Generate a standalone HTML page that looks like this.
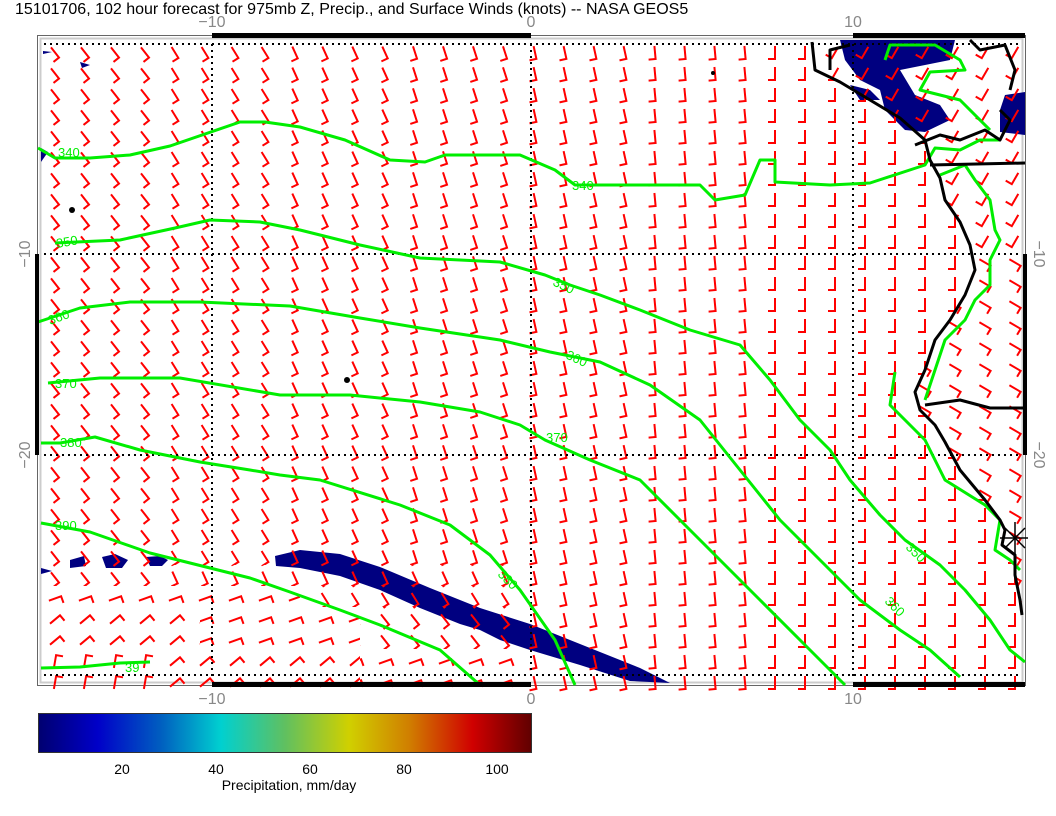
<!DOCTYPE html>
<html><head><meta charset="utf-8"><style>
html,body{margin:0;padding:0;background:#fff;width:1056px;height:816px;overflow:hidden}
svg{display:block}
text{font-family:"Liberation Sans",sans-serif}
</style></head><body>
<svg width="1056" height="816" xmlns="http://www.w3.org/2000/svg">
<defs>
<linearGradient id="cb" x1="0" x2="1" y1="0" y2="0">
<stop offset="0" stop-color="#000070"/>
<stop offset="0.12" stop-color="#0000c8"/>
<stop offset="0.25" stop-color="#0060c0"/>
<stop offset="0.37" stop-color="#00d0d0"/>
<stop offset="0.5" stop-color="#60c060"/>
<stop offset="0.63" stop-color="#d0d000"/>
<stop offset="0.75" stop-color="#d08000"/>
<stop offset="0.88" stop-color="#d00000"/>
<stop offset="1" stop-color="#600000"/>
</linearGradient>
<g id="dummy"></g>
<pattern id="p38" patternUnits="userSpaceOnUse" x="40" y="42" width="30" height="21"><path d="M11,5.4L19,15.6L13.5,19.9" stroke="#f00" stroke-width="2" fill="none"/></pattern>
<pattern id="p32" patternUnits="userSpaceOnUse" x="40" y="42" width="30" height="21"><path d="M11.6,5L18.4,16L12.5,19.7" stroke="#f00" stroke-width="2" fill="none"/></pattern>
<pattern id="p25" patternUnits="userSpaceOnUse" x="40" y="42" width="30" height="21"><path d="M12.3,4.6L17.7,16.4L11.4,19.4" stroke="#f00" stroke-width="2" fill="none"/></pattern>
<pattern id="p18" patternUnits="userSpaceOnUse" x="40" y="42" width="30" height="21"><path d="M13,4.3L17,16.7L10.3,18.9" stroke="#f00" stroke-width="2" fill="none"/></pattern>
<pattern id="p12" patternUnits="userSpaceOnUse" x="40" y="42" width="30" height="21"><path d="M13.6,4.1L16.4,16.9L9.5,18.4" stroke="#f00" stroke-width="2" fill="none"/></pattern>
<pattern id="p5" patternUnits="userSpaceOnUse" x="40" y="42" width="30" height="21"><path d="M14.4,4L15.6,17L8.6,17.6" stroke="#f00" stroke-width="2" fill="none"/></pattern>
<pattern id="p0" patternUnits="userSpaceOnUse" x="40" y="42" width="30" height="21"><path d="M15,4L15,17L8,17" stroke="#f00" stroke-width="2" fill="none"/></pattern>
<pattern id="pm30" patternUnits="userSpaceOnUse" x="40" y="42" width="30" height="21"><path d="M18.3,4.9L11.8,16.1L5.7,12.6" stroke="#f00" stroke-width="2" fill="none"/></pattern>
<pattern id="p60" patternUnits="userSpaceOnUse" x="40" y="42" width="30" height="21"><path d="M9.4,7.3L20.6,13.8L17.1,19.8" stroke="#f00" stroke-width="2" fill="none"/></pattern>
<pattern id="p110" patternUnits="userSpaceOnUse" x="40" y="42" width="30" height="21"><path d="M8.9,12.7L21.1,8.3L23.5,14.9" stroke="#f00" stroke-width="2" fill="none"/></pattern>
<pattern id="p130" patternUnits="userSpaceOnUse" x="40" y="42" width="30" height="21"><path d="M10,14.7L20,6.3L24.5,11.7" stroke="#f00" stroke-width="2" fill="none"/></pattern>
<pattern id="p170" patternUnits="userSpaceOnUse" x="40" y="42" width="30" height="21"><path d="M13.9,16.9L16.1,4.1L23,5.3" stroke="#f00" stroke-width="2" fill="none"/></pattern>
<clipPath id="sea"><path d="M40,42 L812,42 L815,70 L840,82 L870,100 L900,118 L925,140 L930,160 L940,178 L945,200 L960,222 L970,245 L975,270 L965,295 L950,320 L935,340 L925,370 L915,392 L920,410 L935,425 L945,442 L960,470 L985,500 L1000,520 L1005,530 L1002,545 L1015,555 L1015,575 L1020,600 L1022,615 L1022,692 L40,692 Z"/></clipPath>
<clipPath id="land"><path d="M812,42 L815,70 L840,82 L870,100 L900,118 L925,140 L930,160 L940,178 L945,200 L960,222 L970,245 L975,270 L965,295 L950,320 L935,340 L925,370 L915,392 L920,410 L935,425 L945,442 L960,470 L985,500 L1000,520 L1005,530 L1002,545 L1015,555 L1015,575 L1020,600 L1022,615 L1030,615 L1030,42 Z"/></clipPath>
</defs>
<text x="15" y="14" font-size="16" fill="#000">15101706, 102 hour forecast for 975mb Z, Precip., and Surface Winds (knots) -- NASA GEOS5</text>
<rect x="37.5" y="35.5" width="988" height="650" fill="none" stroke="#666" stroke-width="1"/>
<rect x="40.5" y="38.5" width="982" height="644" fill="none" stroke="#ccc" stroke-width="2"/>
<!-- precip -->
<g fill="#000080">
<path d="M275,556 L300,550 L340,554 L380,567 L430,588 L480,608 L530,624 L590,648 L640,668 L670,683 L630,681 L580,665 L530,650 L500,640 L480,630 L460,624 L420,608 L380,590 L340,576 L300,568 L276,566 Z"/>
<path d="M840,40 L955,40 L950,60 L900,70 L915,95 L940,105 L950,120 L925,132 L905,130 L885,110 L880,90 L860,80 L845,60 Z"/>
<path d="M850,85 L870,90 L880,100 L860,100 Z"/>
<path d="M1005,95 L1025,92 L1025,135 L1000,132 L1000,110 Z"/>
<path d="M102,557 L115,554 L128,560 L122,568 L106,568 Z"/>
<path d="M70,560 L84,556 L86,566 L70,568 Z"/>
<path d="M146,557 L160,556 L168,560 L162,566 L150,566 Z"/>
<path d="M41,568 L52,571 L41,574 Z"/>
<path d="M41,148 L48,152 L41,162 Z"/>
<path d="M43,51 L52,52 L43,54 Z"/>
<path d="M80,62 L90,65 L82,68 Z"/>
</g>
<!-- wind barbs -->
<g clip-path="url(#sea)">
<rect x="40" y="42" width="120" height="523" fill="url(#p38)"/>
<rect x="160" y="42" width="120" height="523" fill="url(#p32)"/>
<rect x="280" y="42" width="120" height="523" fill="url(#p25)"/>
<rect x="400" y="42" width="120" height="523" fill="url(#p18)"/>
<rect x="520" y="42" width="120" height="650" fill="url(#p12)"/>
<rect x="640" y="42" width="120" height="650" fill="url(#p5)"/>
<rect x="760" y="42" width="270" height="650" fill="url(#p0)"/>
<rect x="40" y="565" width="120" height="21" fill="url(#p38)"/>
<rect x="160" y="565" width="360" height="21" fill="url(#p25)"/>
<rect x="40" y="586" width="260" height="21" fill="url(#p110)"/>
<rect x="300" y="586" width="220" height="21" fill="url(#p32)"/>
<rect x="40" y="607" width="160" height="42" fill="url(#p130)"/>
<rect x="200" y="607" width="160" height="42" fill="url(#p110)"/>
<rect x="360" y="607" width="160" height="42" fill="url(#p38)"/>
<rect x="40" y="649" width="120" height="42" fill="url(#p170)"/>
<rect x="160" y="649" width="200" height="42" fill="url(#p130)"/>
<rect x="360" y="649" width="160" height="42" fill="url(#p110)"/>
</g>
<g clip-path="url(#land)">
<rect x="800" y="42" width="230" height="210" fill="url(#pm30)"/>
<rect x="800" y="252" width="230" height="370" fill="url(#p60)"/>
</g>
<!-- dotted grid -->
<g stroke="#000" stroke-width="2" stroke-dasharray="2,4" fill="none">
<line x1="212" y1="44" x2="212" y2="676"/>
<line x1="531" y1="44" x2="531" y2="676"/>
<line x1="853" y1="44" x2="853" y2="676"/>
<line x1="44" y1="254" x2="1018" y2="254"/>
<line x1="44" y1="455" x2="1018" y2="455"/>
<line x1="44" y1="44" x2="1018" y2="44"/>
<line x1="44" y1="675" x2="1018" y2="675"/>
</g>
<!-- contours -->
<g stroke="#00ee00" stroke-width="3" fill="none" stroke-linejoin="round">
<polyline points="38,148 55,158 90,158 130,155 170,146 240,122 265,122 300,127 345,140 390,160 425,162 445,155 520,155 555,170 575,185 700,185 715,200 745,195 760,160 775,160 775,182 830,185 870,183 925,165 935,148 960,150 980,140 1000,140"/>
<polyline points="55,243 120,240 175,228 210,220 260,222 300,230 360,245 420,258 500,262 545,275 570,285 600,295 640,310 690,330 740,345 770,380 800,420 830,450 850,480 880,515 905,540 940,565 965,590 990,620 1010,650 1025,662"/>
<polyline points="38,322 80,308 130,302 200,302 290,306 360,318 420,328 500,340 550,352 600,362 650,385 700,420 740,470 780,520 820,560 860,600 900,630 930,650 960,677"/>
<polyline points="48,383 100,378 180,378 280,395 350,395 420,402 480,412 520,425 545,440 590,460 640,480 680,520 720,560 760,600 800,640 830,670 845,685"/>
<polyline points="41,443 60,443 95,437 140,450 200,462 250,470 280,475 320,480 400,505 450,525 490,555 520,590 555,640 575,685"/>
<polyline points="41,523 90,532 150,553 190,563 250,578 290,592 340,610 380,625 440,650 480,685"/>
<polyline points="41,668 80,667 120,663 150,662"/>
<polyline points="895,372 890,405 905,420 925,440 945,480 985,505 1000,520 995,550 1010,560 1020,570"/>
<polyline points="940,175 965,165 975,180 990,200 995,230 1000,240 990,260 990,285 975,300 965,320 945,340 935,370 925,400"/>
<polyline points="885,60 890,45 935,45 960,60 965,70 930,72 920,90 960,100 990,130"/>
</g>
<g fill="#00ee00" font-size="13">
<text x="58" y="157">340</text><text x="572" y="190">340</text>
<text x="57" y="248" transform="rotate(-10 57 248)">350</text>
<text x="552" y="285" transform="rotate(25 552 285)">350</text>
<text x="50" y="325" transform="rotate(-20 50 325)">360</text>
<text x="565" y="358" transform="rotate(25 565 358)">360</text>
<text x="55" y="388">370</text><text x="546" y="442">370</text>
<text x="60" y="447">380</text>
<text x="497" y="575" transform="rotate(45 497 575)">380</text>
<text x="55" y="530">390</text>
<text x="125" y="672">39</text>
<text x="905" y="548" transform="rotate(45 905 548)">350</text>
<text x="884" y="602" transform="rotate(45 884 602)">360</text>
</g>
<!-- coastline -->
<g stroke="#000" stroke-width="3" fill="none" stroke-linejoin="round">
<polyline points="812,42 815,70 840,82 870,100 900,118 925,140 930,160 940,178 945,200 960,222 970,245 975,270 965,295 950,320 935,340 925,370 915,392 920,410 935,425 945,442 960,470 985,500 1000,520 1005,530 1002,545 1015,555 1015,575 1020,600 1022,615"/>
<polyline points="925,405 960,400 990,408 1025,408"/>
<polyline points="930,165 1025,163"/>
<polyline points="915,145 940,135 960,140 985,130 1000,140 1010,120 1000,110"/>
<polyline points="970,40 980,50 1005,45 1015,70 1010,90"/>
<polyline points="850,45 830,50 830,70"/>
</g>
<g stroke="#000" stroke-width="1.5">
<line x1="1015" y1="522" x2="1015" y2="555"/><line x1="1000" y1="538" x2="1028" y2="538"/>
<line x1="1005" y1="528" x2="1025" y2="548"/><line x1="1005" y1="548" x2="1025" y2="528"/>
</g>
<g fill="#000"><circle cx="72" cy="210" r="3"/><circle cx="347" cy="380" r="3"/><circle cx="713" cy="73" r="2"/></g>
<g fill="#000">
<rect x="212" y="33" width="319" height="5"/><rect x="853" y="33" width="172" height="5"/>
<rect x="212" y="682" width="319" height="5"/><rect x="853" y="682" width="172" height="5"/>
<rect x="35" y="254" width="4" height="201"/><rect x="1023" y="254" width="4" height="201"/>
</g>
<g fill="#888" font-size="16" text-anchor="middle">
<text x="212" y="27">−10</text><text x="531" y="27">0</text><text x="853" y="27">10</text>
<text x="212" y="704">−10</text><text x="531" y="704">0</text><text x="853" y="704">10</text>
<text transform="translate(30,254) rotate(-90)">−10</text>
<text transform="translate(30,455) rotate(-90)">−20</text>
<text transform="translate(1034,254) rotate(90)">−10</text>
<text transform="translate(1034,455) rotate(90)">−20</text>
</g>
<rect x="38.5" y="713.5" width="493" height="39" fill="url(#cb)" stroke="#333"/>
<g font-size="14" fill="#000" text-anchor="middle">
<text x="122" y="774">20</text><text x="216" y="774">40</text><text x="310" y="774">60</text><text x="404" y="774">80</text><text x="497" y="774">100</text>
<text x="289" y="790">Precipitation, mm/day</text>
</g>
</svg>
</body></html>
